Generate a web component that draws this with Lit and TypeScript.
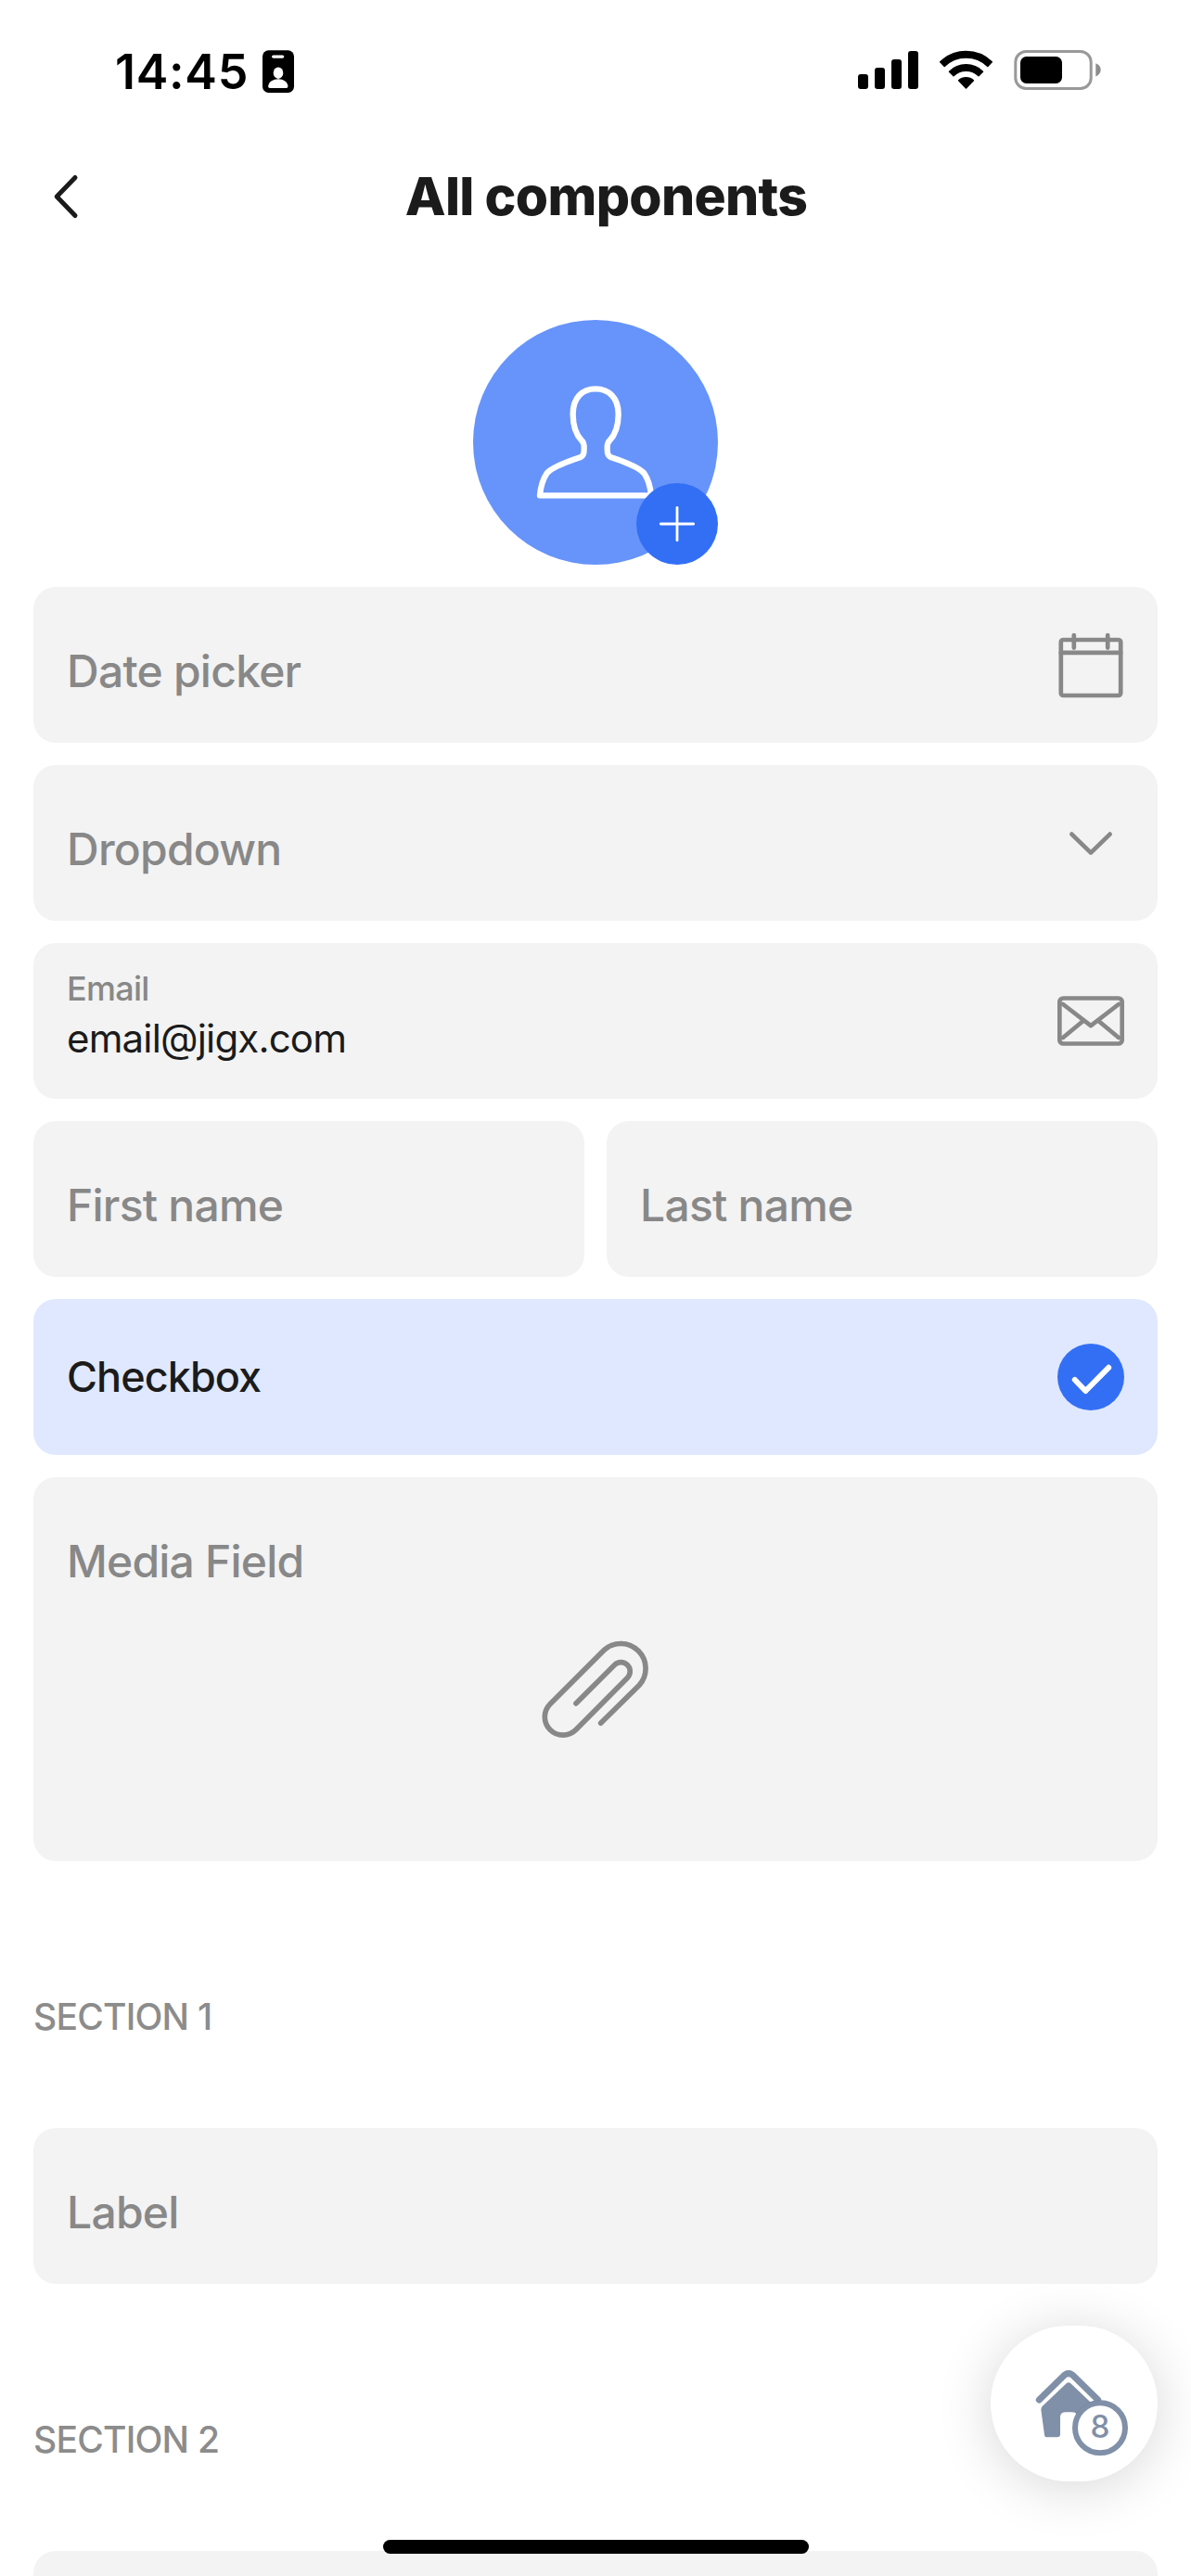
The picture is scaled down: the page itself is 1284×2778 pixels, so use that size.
import { LitElement, html, css, svg, nothing, type TemplateResult } from "lit";
import { customElement, property } from "lit/decorators.js";
import { classMap } from "lit/directives/class-map.js";

const icons: Record<string, TemplateResult> = {
  calendar: svg`
    <rect x="3.8" y="9" width="64.4" height="60" rx="2.5" />
    <path d="M3.8 22.9H68.2M17.8 4V17.6M54.2 4V17.6" />`,
  chevron: svg`<path d="M15.4 26.6L36 46.6L56.6 26.6" />`,
  mail: svg`
    <rect x="2.3" y="11.5" width="67.4" height="49" rx="4" />
    <path d="M6 18L36 41.2L66 18M6 54L26.8 36.8M66 54L45.2 36.8" />`,
};

/** A filled form field: floating label, optional value and trailing icon. */
@customElement("form-field")
export class FormField extends LitElement {
  @property() label = "";
  @property() value = "";
  @property() icon = "";

  static styles = css`
    :host {
      display: block;
      flex: 1;
      min-width: 0;
    }
    .field {
      box-sizing: border-box;
      height: 168px;
      padding: 0 36px;
      border-radius: 24px;
      background: #f3f3f3;
      display: flex;
      align-items: center;
      justify-content: space-between;
    }
    .label {
      padding-top: 13px;
      font-size: 48px;
      line-height: 60px;
      font-weight: 500;
      letter-spacing: -0.76px;
      color: #888;
      white-space: nowrap;
    }
    .text {
      display: flex;
      flex-direction: column;
      align-self: flex-start;
      padding-top: 25px;
    }
    .filled .label {
      padding-top: 0;
      font-size: 36px;
      line-height: 48px;
      letter-spacing: -0.75px;
    }
    .value {
      margin-top: 5px;
      font-size: 42px;
      line-height: 50px;
      letter-spacing: -0.84px;
      color: #1b1b1b;
    }
    .icon {
      width: 72px;
      height: 72px;
      flex: none;
      fill: none;
      stroke: #888;
      stroke-width: 4.7;
      stroke-linecap: round;
      stroke-linejoin: round;
    }
  `;

  render() {
    const label = this.label ? html`<span class="label">${this.label}</span>` : nothing;
    return html`<div class=${classMap({ field: true, filled: !!this.value })}>
      ${this.value
        ? html`<div class="text">${label}<span class="value">${this.value}</span></div>`
        : label}
      ${this.icon
        ? html`<svg class="icon" viewBox="0 0 72 72">${icons[this.icon]}</svg>`
        : nothing}
    </div>`;
  }
}

@customElement("status-bar")
export class StatusBar extends LitElement {
  static styles = css`
    :host {
      display: flex;
      justify-content: space-between;
      box-sizing: border-box;
      height: 141px;
      padding: 47px 96px 0 124px;
    }
    .left {
      display: flex;
      gap: 15px;
    }
    .time {
      font-size: 52px;
      line-height: 61px;
      font-weight: 600;
      letter-spacing: 0.7px;
      color: #000;
    }
    .badge {
      width: 34px;
      height: 46px;
      margin-top: 7px;
    }
    .signals {
      width: 264px;
      height: 44px;
      margin-top: 7px;
    }
  `;

  render() {
    return html`
      <div class="left">
        <span class="time">14:45</span>
        <svg class="badge" viewBox="0 0 34 46">
          <rect y=".3" width="34" height="45.7" rx="6.5" />
          <rect x="10" y="5.4" width="13.3" height="3.4" rx="1.7" fill="#fff" />
          <ellipse cx="17" cy="24.7" rx="5.3" ry="6.2" fill="#fff" />
          <path
            d="M6.2 38.6C7 34 11.5 31.2 17 31.2S26.6 34 27.4 38.6C27.6 40 27 41 25.5 41H8C6.6 41 6 40 6.2 38.6Z"
            fill="#fff"
          />
        </svg>
      </div>
      <svg class="signals" viewBox="924 54 264 44">
        <rect x="925" y="80" width="11" height="16" rx="3" />
        <rect x="943" y="73" width="11" height="23" rx="3" />
        <rect x="961" y="64" width="11" height="32" rx="3" />
        <rect x="979" y="55" width="11" height="41" rx="3" />
        <g stroke="#000" stroke-width="1.5" stroke-linejoin="round">
          <path d="M1013.7 66.8A39.8 39.8 0 0 1 1069.3 66.8L1064.8 71.5A33.5 33.5 0 0 0 1018.2 71.5Z" />
          <path d="M1023.5 77.2A25.5 25.5 0 0 1 1059.5 77.2L1055 81.8A19.5 19.5 0 0 0 1028 81.8Z" />
          <path d="M1033.6 86.7A11.8 11.8 0 0 1 1049.4 86.7L1041.5 95Z" />
        </g>
        <rect x="1094.8" y="55.5" width="81.4" height="40" rx="11.5" fill="none" stroke="#999" stroke-width="3" />
        <rect x="1100" y="61" width="45" height="29" rx="6.5" />
        <path d="M1181.3 68.3C1184.6 69.5 1186.7 72.2 1186.7 75.3S1184.6 81.2 1181.3 82.4Z" fill="#8c8c8c" />
      </svg>
    `;
  }
}

@customElement("app-root")
export class AppRoot extends LitElement {
  static styles = css`
    :host {
      display: block;
      position: relative;
      width: 1284px;
      height: 2778px;
      overflow: hidden;
      background: #fff;
      font-family: Inter, "Liberation Sans", sans-serif;
    }
    .header {
      display: grid;
      grid-template-columns: 132px 1fr 109px;
      align-items: center;
      height: 142px;
    }
    .back {
      width: 30px;
      height: 50px;
      margin-left: 56px;
      fill: none;
      stroke: #1b1b1b;
      stroke-width: 5;
      stroke-linecap: round;
      stroke-linejoin: round;
    }
    .title {
      margin: 0;
      text-align: center;
      font-size: 57px;
      line-height: 68px;
      font-weight: 800;
      letter-spacing: -0.68px;
      color: #1b1b1b;
    }
    .form {
      display: flex;
      flex-direction: column;
      gap: 24px;
      padding: 62px 36px 0;
    }
    .avatar {
      width: 264px;
      height: 264px;
      align-self: center;
    }
    .row {
      display: flex;
      gap: 24px;
    }
    .checkbox {
      box-sizing: border-box;
      height: 168px;
      padding: 0 36px;
      border-radius: 24px;
      background: #e0e8ff;
      display: flex;
      align-items: center;
      justify-content: space-between;
      font-size: 45px;
      line-height: 54px;
      font-weight: 500;
      letter-spacing: -0.95px;
      color: #1b1b1b;
    }
    .check {
      width: 72px;
      height: 72px;
    }
    .media {
      box-sizing: border-box;
      height: 414px;
      padding: 61px 36px 0;
      border-radius: 24px;
      background: #f3f3f3;
      display: flex;
      flex-direction: column;
      font-size: 48px;
      line-height: 60px;
      font-weight: 500;
      letter-spacing: -0.8px;
      color: #888;
    }
    .clip {
      width: 120px;
      height: 108px;
      margin-top: 54px;
      align-self: center;
    }
    .section {
      box-sizing: border-box;
      height: 240px;
      margin: 0;
      padding: 120px 0 0;
      font-size: 39px;
      line-height: 48px;
      font-weight: 500;
      letter-spacing: -0.78px;
      color: #8c8c8c;
    }
    .fab {
      position: absolute;
      right: 36px;
      bottom: 102px;
      width: 180px;
      height: 168px;
      border-radius: 84px;
      background: #fff;
      box-shadow: 0 6px 60px rgba(0, 0, 0, 0.16);
    }
    .home {
      display: block;
      width: 180px;
      height: 168px;
      font-weight: 500;
    }
    .indicator {
      position: absolute;
      left: 413px;
      bottom: 24px;
      width: 459px;
      height: 15px;
      border-radius: 8px;
      background: #000;
    }
  `;

  render() {
    return html`
      <status-bar></status-bar>
      <header class="header">
        <svg class="back" viewBox="0 0 30 50"><path d="M25 4.5L5.2 25L25 45.5" /></svg>
        <h1 class="title">All components</h1>
      </header>

      <main class="form">
        <svg class="avatar" viewBox="60 45 792 792">
          <circle cx="456" cy="441" r="396" fill="#6794fa" />
          <path
            d="M276 613C279 580 286 560 298 542C312 522 372 501 408 489C416 486 419 475 419 463C419 452 420 444 412 436C393 416 383 390 383 350C383 296 414 268 456 268C498 268 530 296 530 350C530 390 520 416 501 436C493 444 494 452 494 463C494 475 497 486 505 489C541 501 598 522 614 542C626 560 633 580 636 613Z"
            fill="none"
            stroke="#fff"
            stroke-width="19"
            stroke-linejoin="round"
          />
          <circle cx="720" cy="705" r="132" fill="#336ff5" />
          <path d="M667 705H773M720 652V758" stroke="#fff" stroke-width="8.5" stroke-linecap="round" />
        </svg>

        <form-field label="Date picker" icon="calendar"></form-field>
        <form-field label="Dropdown" icon="chevron"></form-field>
        <form-field label="Email" value="email@jigx.com" icon="mail"></form-field>
        <div class="row">
          <form-field label="First name"></form-field>
          <form-field label="Last name"></form-field>
        </div>
        <div class="checkbox">
          <span>Checkbox</span>
          <svg class="check" viewBox="0 0 72 72">
            <circle cx="36" cy="36" r="36" fill="#336ff5" />
            <path
              d="M18.8 39L30.3 51L55.2 25.8"
              fill="none"
              stroke="#fff"
              stroke-width="6"
              stroke-linecap="round"
              stroke-linejoin="round"
            />
          </svg>
        </div>
        <div class="media">
          <span>Media Field</span>
          <svg class="clip" viewBox="66 84 360 324">
            <path
              d="M263 355L387 232.5A80.500 80.500 0 0 0 273 119L99 293A59 59 0 0 0 183 376L349 208.5A29 29 0 0 0 307.5 166.5L183 291"
              fill="none"
              stroke="#888"
              stroke-width="17"
              stroke-linecap="round"
              stroke-linejoin="round"
            />
          </svg>
        </div>
        <h2 class="section">SECTION 1</h2>
        <form-field label="Label"></form-field>
        <h2 class="section">SECTION 2</h2>
        <form-field></form-field>
      </main>

      <div class="fab">
        <svg class="home" viewBox="84 113 540 504">
          <path
            d="M241 353L323 273Q336 263 349 273L431 353"
            fill="none"
            stroke="#8090a8"
            stroke-width="21"
            stroke-linecap="round"
            stroke-linejoin="round"
          />
          <path
            d="M330 299Q336 294 342 299L421 374Q425 379 425 386L416 466Q415 474 407 474H374Q365 474 365 465V409Q365 393 345 393H328Q309 393 309 409V465Q309 474 300 474H267Q259 474 258 466L247 386Q247 379 251 374Z"
            fill="#8090a8"
          />
          <circle cx="438" cy="444" r="81" fill="#fff" stroke="#8090a8" stroke-width="18" />
          <path d="M361 400A89.500 89.500 0 0 1 440 354.5" fill="none" stroke="#74849d" stroke-width="2" />
          <text x="438" y="477" font-size="100" text-anchor="middle" fill="#8090a8">8</text>
        </svg>
      </div>
      <div class="indicator"></div>
    `;
  }
}
